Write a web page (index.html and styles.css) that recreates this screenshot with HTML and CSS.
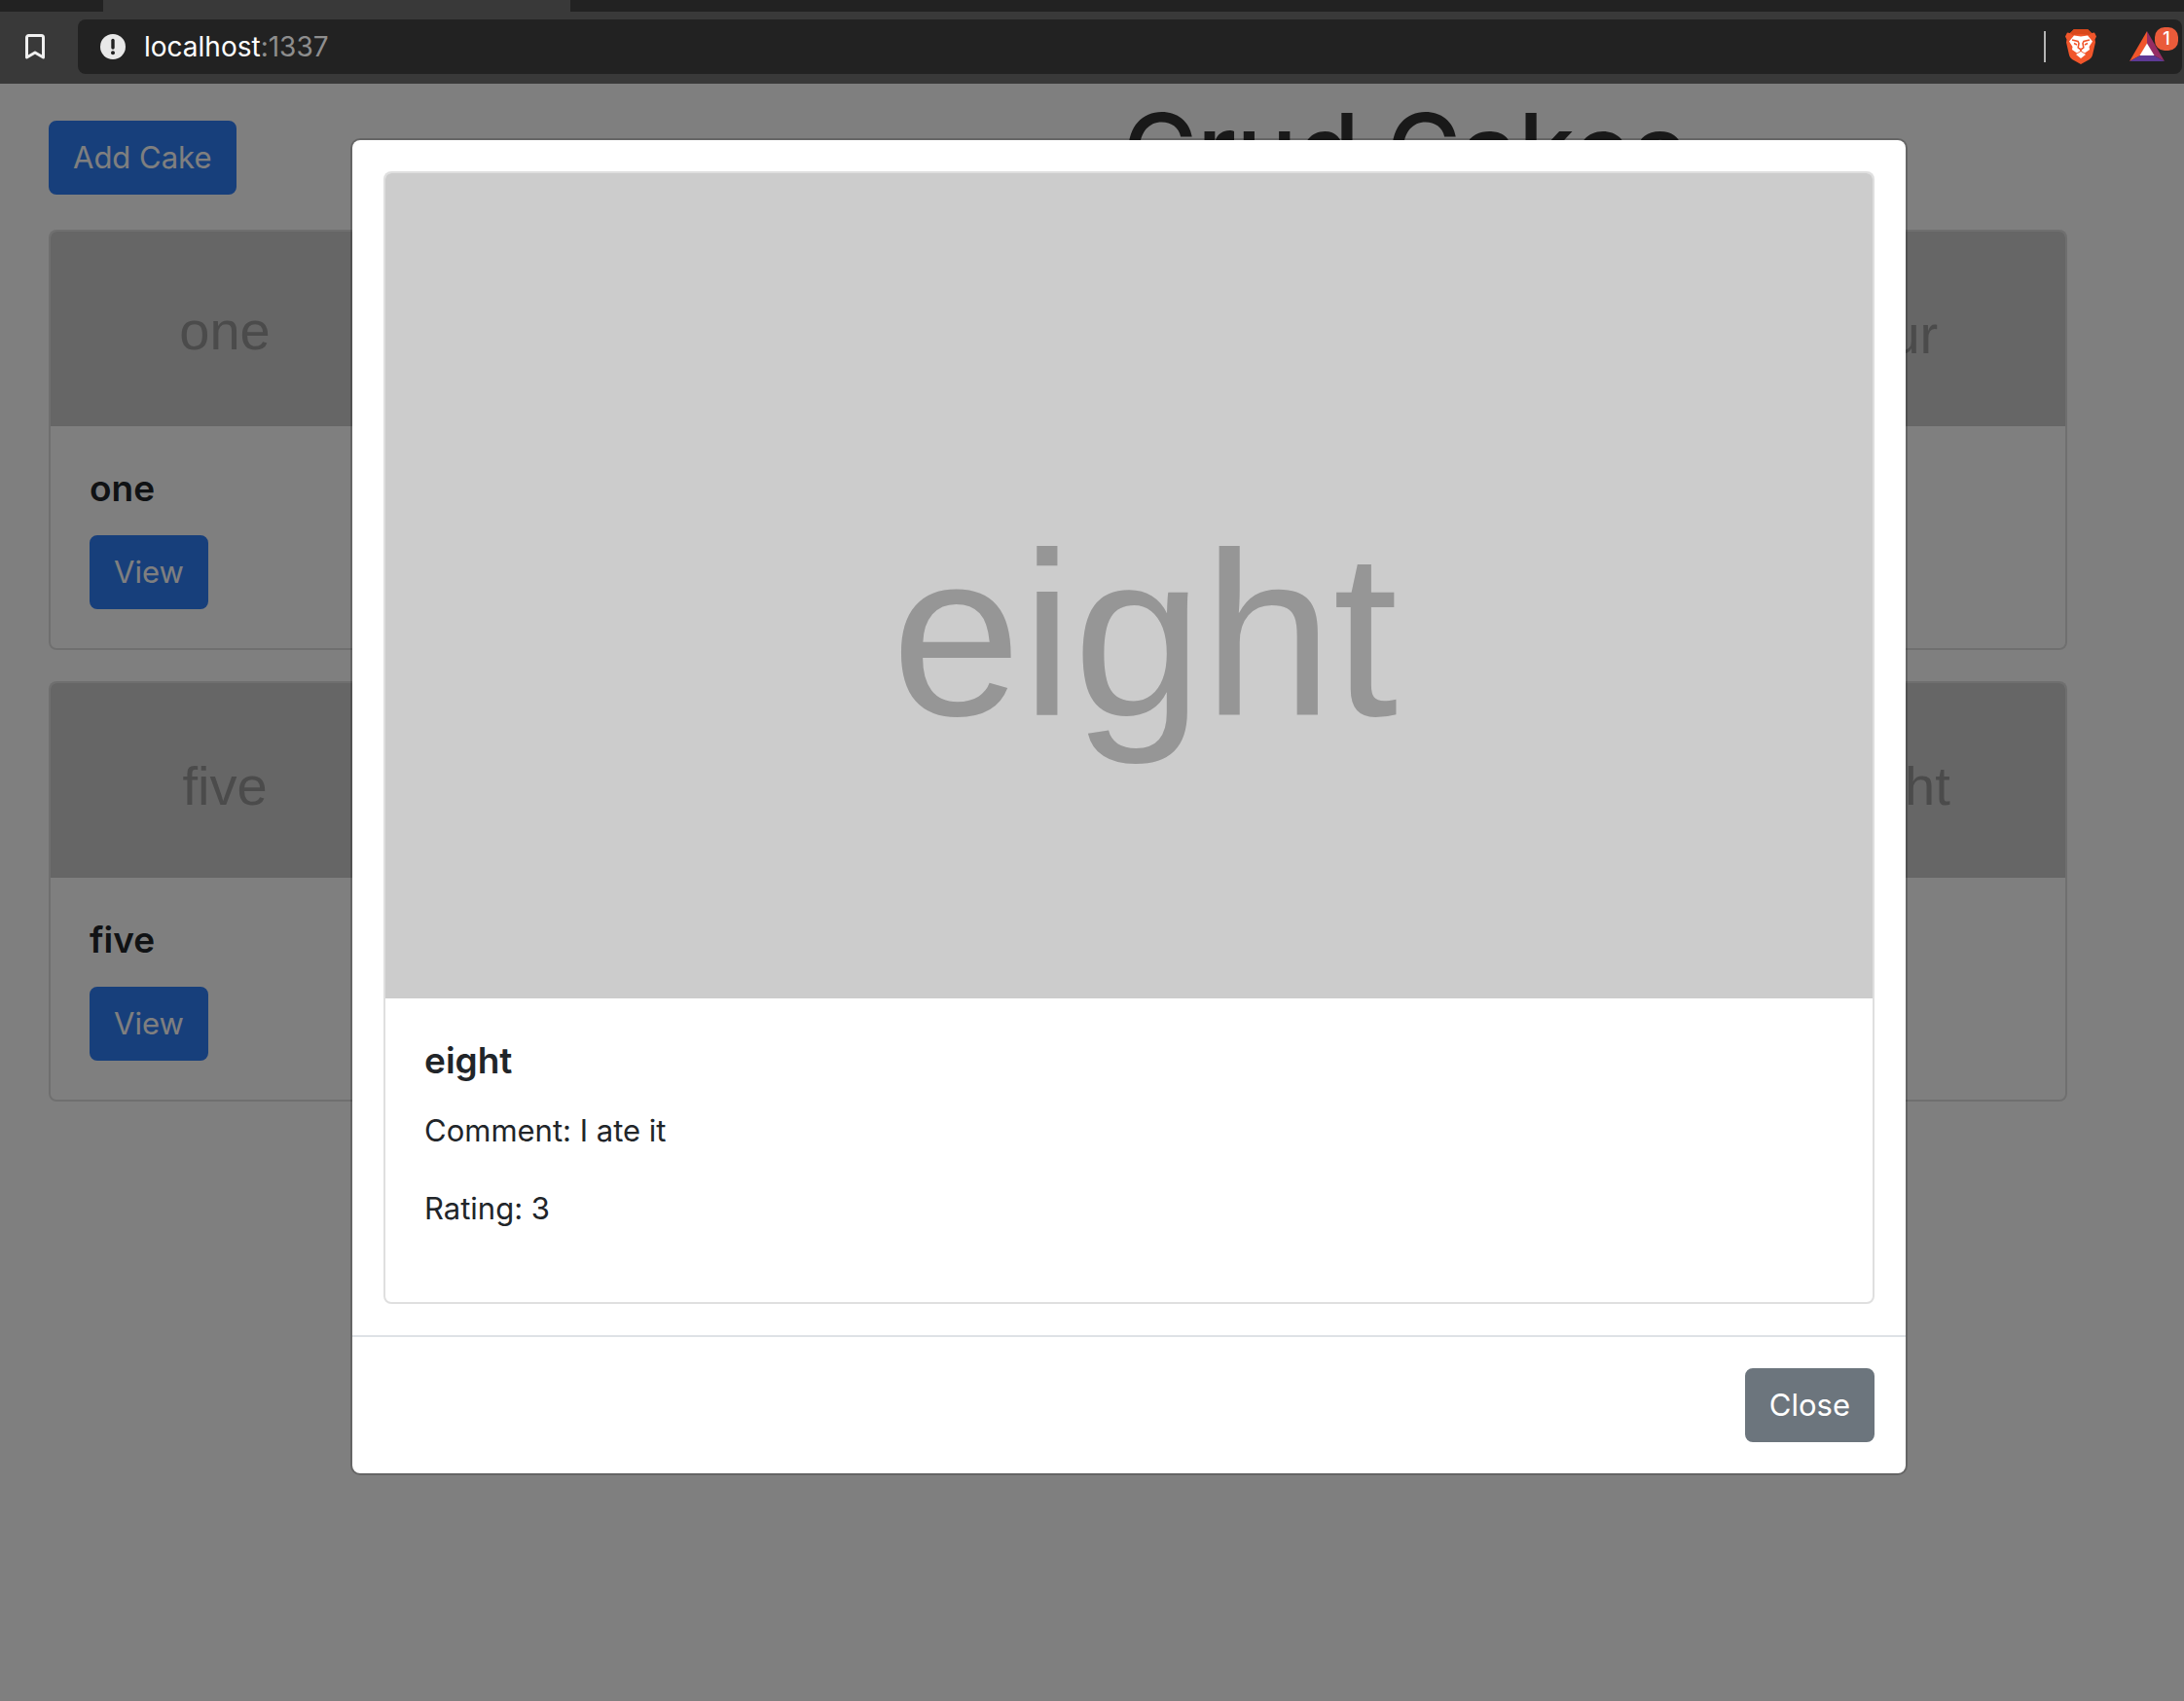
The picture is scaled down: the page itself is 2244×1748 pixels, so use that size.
FILE: index.html
```html
<!DOCTYPE html>
<html lang="en">
<head>
<meta charset="utf-8">
<meta name="viewport" content="width=device-width, initial-scale=1">
<title>Crud Cakes</title>
<link rel="stylesheet" href="styles.css">
</head>
<body>
<header class="browser">
  <div class="tab-strip"><div class="tab"></div></div>
  <div class="toolbar">
    <button class="icon-button" type="button" aria-label="Bookmark this page">
      <svg width="20" height="26" viewBox="0 0 20 26"><path d="M1.500 3.500a2 2 0 0 1 2-2h13a2 2 0 0 1 2 2v20.500L10 19l-8.500 5z" fill="none" stroke="#f0f0f0" stroke-width="3" stroke-linejoin="round"/></svg>
    </button>
    <div class="address-bar">
      <button class="icon-button" type="button" aria-label="Site information">
        <svg width="26" height="26" viewBox="0 0 26 26"><circle cx="13" cy="13" r="13" fill="#e8e8e8"/><path d="M13 6.500v7.500" stroke="#222" stroke-width="3.400" stroke-linecap="round"/><circle cx="13" cy="19.300" r="2" fill="#222"/></svg>
      </button>
      <div class="url">localhost<span class="port">:1337</span></div>
      <div class="divider"></div>
      <button class="icon-button" type="button" aria-label="Brave Shields">
        <svg width="32" height="36" viewBox="0 0 32 36"><path d="M9 0h14l4 4 3-.5 2 4-1.500 3 .5 3-3 13c-.6 2.400-1.700 3.500-3.500 4.800L16 36l-8.500-4.700C5.700 30 4.600 28.900 4 26.500l-3-13 .5-3L0 7.500l2-4 3 .5z" fill="#f1562b"/><path d="M9 0h14l4 4-2.500 2L16 5 7.500 6 5 4z" fill="#d9481c"/><path d="M9 6.500l7 1 7-1 5 6-3.500 5.500.5 3-5 3.500L16 22l-4 2.500L7 21l.5-3L4 12.500zM11 26l5-3 5 3-5 4z" fill="#fff"/><path d="M7 11l6 1.500 1 2-.8 4.500 2.800 2 2.800-2-.8-4.500 1-2 6-1.500M9 14.500l3 1.500M23 14.500l-3 1.500M16 21v2" fill="none" stroke="#f1562b" stroke-width="1.600"/></svg>
      </button>
      <button class="icon-button rewards" type="button" aria-label="Brave Rewards">
        <svg width="36" height="32" viewBox="0 0 36 32"><path d="M18 0v13l-7 12-11 6z" fill="#f1562b"/><path d="M18 0l18 31-11-6-7-12z" fill="#962d63"/><path d="M0 31l11-6h14l11 6z" fill="#5e3a96"/><path d="M18 12.500L25.500 25h-15z" fill="#fff"/></svg>
        <span class="badge">1</span>
      </button>
    </div>
  </div>
</header>

<main class="page">
  <div class="page-head">
    <button class="btn btn-primary" type="button">Add Cake</button>
    <h1 class="page-title">Crud Cakes</h1>
  </div>
  <div class="cake-grid">
    <article class="card"><div class="card-image card-image-short">one</div><div class="card-body"><h2 class="card-title">one</h2><button class="btn btn-primary" type="button">View</button></div></article>
    <article class="card"><div class="card-image">two</div><div class="card-body"><h2 class="card-title">two</h2><button class="btn btn-primary" type="button">View</button></div></article>
    <article class="card"><div class="card-image">three</div><div class="card-body"><h2 class="card-title">three</h2><button class="btn btn-primary" type="button">View</button></div></article>
    <article class="card"><div class="card-image">four</div><div class="card-body"><h2 class="card-title">four</h2><button class="btn btn-primary" type="button">View</button></div></article>
    <article class="card"><div class="card-image">five</div><div class="card-body"><h2 class="card-title">five</h2><button class="btn btn-primary" type="button">View</button></div></article>
    <article class="card"><div class="card-image">six</div><div class="card-body"><h2 class="card-title">six</h2><button class="btn btn-primary" type="button">View</button></div></article>
    <article class="card"><div class="card-image">seven</div><div class="card-body"><h2 class="card-title">seven</h2><button class="btn btn-primary" type="button">View</button></div></article>
    <article class="card"><div class="card-image">eight</div><div class="card-body"><h2 class="card-title">eight</h2><button class="btn btn-primary" type="button">View</button></div></article>
  </div>

  <div class="backdrop">
    <section class="modal" role="dialog" aria-modal="true" aria-labelledby="cake-name">
      <div class="modal-body">
        <article class="card">
          <div class="card-image card-image-large">eight</div>
          <div class="card-body">
            <h2 class="card-title" id="cake-name">eight</h2>
            <p class="card-text">Comment: I ate it</p>
            <p class="card-text">Rating: 3</p>
          </div>
        </article>
      </div>
      <footer class="modal-footer">
        <button class="btn btn-secondary" type="button">Close</button>
      </footer>
    </section>
  </div>
</main>
</body>
</html>
```
FILE: styles.css
```css
* {
  box-sizing: border-box;
}

body {
  margin: 0;
  min-height: 100vh;
  display: flex;
  flex-direction: column;
  font-family: Inter, Roboto, sans-serif;
  font-size: 31px;
  line-height: 48px;
  color: #212529;
  background: #fff;
}

h1,
h2,
p {
  margin: 0;
}

button {
  font: inherit;
  cursor: pointer;
}

svg {
  display: block;
}

/* Browser chrome */

.browser {
  background: #393939;
}

.tab-strip {
  height: 12px;
  padding-left: 106px;
  background: #222;
}

.tab {
  width: 480px;
  height: 100%;
  background: #393939;
}

.toolbar {
  display: flex;
  align-items: center;
  gap: 34px;
  padding: 8px 2px 10px 26px;
}

.icon-button {
  padding: 0;
  border: 0;
  background: none;
}

.address-bar {
  flex: 1;
  display: flex;
  align-items: center;
  height: 56px;
  padding: 0 18px 0 23px;
  border-radius: 8px;
  background: #222;
}

.url {
  flex: 1;
  padding-left: 19px;
  font-size: 28px;
  line-height: 32px;
  color: #fff;
}

.port {
  color: #8e8e8e;
}

.divider {
  width: 2px;
  height: 32px;
  margin-right: 20px;
  background: #b4b4b4;
}

.rewards {
  position: relative;
  margin-left: 34px;
}

.badge {
  position: absolute;
  top: -4px;
  right: -14px;
  width: 24px;
  height: 24px;
  border-radius: 10px;
  background: #ea5b3a;
  color: #fff;
  font-size: 18px;
  font-weight: 500;
  line-height: 24px;
  text-align: center;
}

/* Page */

.page {
  flex: 1;
  position: relative;
  padding: 16px 120px 32px 50px;
}

.page-head {
  display: grid;
  grid-template-columns: 1fr 2fr;
  gap: 32px;
  align-items: center;
  justify-items: start;
  height: 120px;
  margin-bottom: 14px;
}

.page-title {
  align-self: start;
  justify-self: center;
  font-size: 104px;
  font-weight: 500;
  line-height: 104px;
  color: #333;
}

.cake-grid {
  display: grid;
  grid-template-columns: repeat(4, 362px);
  justify-content: space-between;
  gap: 32px 0;
}

.card {
  border: 2px solid rgba(0, 0, 0, 0.125);
  border-radius: 8px;
  background: #fff;
  background-clip: padding-box;
  overflow: hidden;
}

.card-image {
  display: flex;
  align-items: center;
  justify-content: center;
  height: 200px;
  padding-top: 12px;
  background: #ccc;
  color: #969696;
  font-family: "Liberation Sans", Arial, sans-serif;
  font-size: 56px;
  line-height: 72px;
}

.card-image-short {
  padding-top: 4px;
}

.card-image-large {
  height: 848px;
  padding: 100px 0 0 32px;
  font-size: 240px;
  line-height: 288px;
}

.card-body {
  padding: 40px;
}

.card-title {
  margin-bottom: 24px;
  font-size: 37px;
  font-weight: 600;
  line-height: 48px;
}

.card-text {
  margin-bottom: 32px;
}

.btn {
  display: block;
  padding: 12px 23px;
  border: 2px solid transparent;
  border-radius: 8px;
  color: #fff;
}

.btn-primary {
  border-color: #2f7ef7;
  background: #2f7ef7;
}

.btn-secondary {
  border-color: #6c757d;
  background: #6c757d;
}

/* Cake details dialog */

.backdrop {
  position: absolute;
  inset: 0;
  padding: 56px 284px 56px 360px;
  background: rgba(0, 0, 0, 0.5);
}

.modal {
  max-width: 1600px;
  border: 2px solid rgba(0, 0, 0, 0.2);
  border-radius: 10px;
  background: #fff;
  background-clip: padding-box;
}

.modal-body {
  padding: 32px;
}

.modal-footer {
  display: flex;
  justify-content: flex-end;
  padding: 32px;
  border-top: 2px solid #dee2e6;
}
```
